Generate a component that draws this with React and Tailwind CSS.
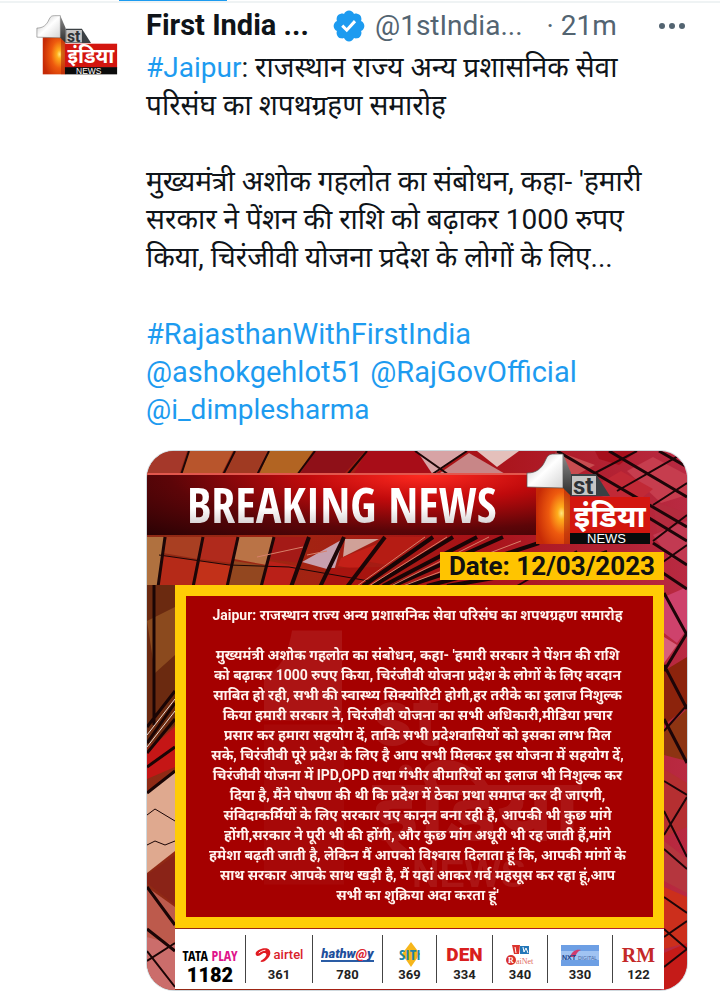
import React from "react";

const tweetLines = [
    { parts: [{ tag: "#Jaipur" }, ": राजस्थान राज्य अन्य प्रशासनिक सेवा"] },
    { parts: ["परिसंघ का शपथग्रहण समारोह"] },
    { parts: [] },
    { parts: ["मुख्यमंत्री अशोक गहलोत का संबोधन, कहा- 'हमारी"] },
    { parts: ["सरकार ने पेंशन की राशि को बढ़ाकर 1000 रुपए"] },
    { parts: ["किया, चिरंजीवी योजना प्रदेश के लोगों के लिए..."] },
    { parts: [] },
    { parts: [{ tag: "#RajasthanWithFirstIndia" }], large: true },
    { parts: [{ tag: "@ashokgehlot51" }, " ", { tag: "@RajGovOfficial" }], large: true },
    { parts: [{ tag: "@i_dimplesharma" }] },
];

const newsLines = [
    "Jaipur: राजस्थान राज्य अन्य प्रशासनिक सेवा परिसंघ का शपथग्रहण समारोह",
    "",
    "मुख्यमंत्री अशोक गहलोत का संबोधन, कहा- 'हमारी सरकार ने पेंशन की राशि",
    "को बढ़ाकर 1000 रुपए किया, चिरंजीवी योजना प्रदेश के लोगों के लिए वरदान",
    "साबित हो रही, सभी की स्वास्थ्य सिक्योरिटी होगी,हर तरीके का इलाज निशुल्क",
    "किया हमारी सरकार ने, चिरंजीवी योजना का सभी अधिकारी,मीडिया प्रचार",
    "प्रसार कर हमारा सहयोग दें, ताकि सभी प्रदेशवासियों को इसका लाभ मिल",
    "सके, चिरंजीवी पूरे प्रदेश के लिए है आप सभी मिलकर इस योजना में सहयोग दें,",
    "चिरंजीवी योजना में IPD,OPD तथा गंभीर बीमारियों का इलाज भी निशुल्क कर",
    "दिया है, मैंने घोषणा की थी कि प्रदेश में ठेका प्रथा समाप्त कर दी जाएगी,",
    "संविदाकर्मियों के लिए सरकार नए कानून बना रही है, आपकी भी कुछ मांगे",
    "होंगी,सरकार ने पूरी भी की होंगी, और कुछ मांग अधूरी भी रह जाती हैं,मांगे",
    "हमेशा बढ़ती जाती है, लेकिन मैं आपको विश्वास दिलाता हूं कि, आपकी मांगों के",
    "साथ सरकार आपके साथ खड़ी है, मैं यहां आकर गर्व महसूस कर रहा हूं,आप",
    "सभी का शुक्रिया अदा करता हूं'",
];

const ChannelLogo = ({ className, id }) => (
    <svg viewBox="0 0 125 92" className={className} role="img" aria-label="1st India News">
        <defs>
            <linearGradient id={`${id}-one`} x1="0" y1="0" x2="1" y2="1">
                <stop offset="0" stopColor="#b9b9b9" />
                <stop offset="0.5" stopColor="#ffffff" />
                <stop offset="1" stopColor="#d4d4d4" />
            </linearGradient>
            <radialGradient id={`${id}-glow`} cx="0.75" cy="0.46" r="0.75">
                <stop offset="0" stopColor="#ffe680" />
                <stop offset="0.15" stopColor="#ffae1c" />
                <stop offset="0.5" stopColor="#ee5a0e" />
                <stop offset="1" stopColor="#c62a06" />
            </radialGradient>
            <linearGradient id={`${id}-side`} x1="0" y1="0" x2="0" y2="1">
                <stop offset="0" stopColor="#8b8b8b" />
                <stop offset="1" stopColor="#2c2c2c" />
            </linearGradient>
        </defs>
        <rect x="10" y="34" width="34" height="57" fill={`url(#${id}-glow)`} />
        <path d="M38 34l7 9v48h-7z" fill="#a51d08" opacity="0.5" />
        <path d="M1 34V20c9 0 15-4 19-14 2-4 4-5 8-5h9v34z" fill={`url(#${id}-one)`} stroke="#555" strokeWidth="0.7" />
        <path d="M37 1l8 19v23l-8-8z" fill={`url(#${id}-side)`} />
        <path d="M45 21h25l14 22H45z" fill="#3b4044" />
        <rect x="46" y="23" width="24" height="19" fill="#c5c5c5" />
        <rect x="44" y="44" width="80" height="37" fill="#d3160f" />
        <rect x="44" y="80" width="80" height="11" fill="#0b0b0b" />
        <text x="47" y="41" fontSize="24" fontWeight="700" fill="#2d3236" fontFamily="Roboto, sans-serif">st</text>
        <text x="48" y="74" fontSize="31" fontWeight="700" fill="#fff" fontFamily="'Noto Sans', sans-serif">इंडिया</text>
        <text x="61" y="90" fontSize="13" fill="#fff" fontFamily="'Liberation Sans', sans-serif">NEWS</text>
    </svg>
);

const VerifiedBadge = () => (
    <svg viewBox="0 0 22 22" className="h-9 w-9 shrink-0" role="img" aria-label="Verified account">
        <path
            fill="#1d9bf0"
            d="M20.396 11c-.018-.646-.215-1.275-.57-1.816-.354-.54-.852-.972-1.438-1.246.223-.607.27-1.264.14-1.897-.131-.634-.437-1.218-.882-1.687-.47-.445-1.053-.75-1.687-.882-.633-.13-1.29-.083-1.897.14-.273-.587-.704-1.086-1.245-1.44S11.647 1.62 11 1.604c-.646.017-1.273.213-1.813.568s-.969.854-1.24 1.44c-.608-.223-1.267-.272-1.902-.14-.635.13-1.22.436-1.69.882-.445.47-.749 1.055-.878 1.688-.13.633-.08 1.29.144 1.896-.587.274-1.087.705-1.443 1.245-.356.54-.555 1.17-.574 1.817.02.647.218 1.276.574 1.817.356.54.856.972 1.443 1.245-.224.606-.274 1.263-.144 1.896.13.634.433 1.218.877 1.688.47.443 1.054.747 1.687.878.633.132 1.29.084 1.897-.136.274.586.705 1.084 1.246 1.439.54.354 1.17.551 1.816.569.647-.016 1.276-.213 1.817-.567s.972-.854 1.245-1.44c.604.239 1.266.296 1.903.164.636-.132 1.22-.447 1.68-.907.46-.46.776-1.044.908-1.681s.075-1.299-.165-1.903c.586-.274 1.084-.705 1.439-1.246.354-.54.551-1.17.569-1.816z"
        />
        <path fill="#fff" d="M9.662 14.85l-3.429-3.428 1.293-1.302 2.072 2.072 4.4-4.794 1.347 1.246z" />
    </svg>
);

// Tiled roof photo behind the news card
const Backdrop = () => (
    <svg
        viewBox="0 0 540 539"
        preserveAspectRatio="xMidYMid slice"
        className="absolute inset-0 h-full w-full"
        aria-hidden="true"
    >
        <defs>
            <linearGradient id="roof" x1="0" y1="0" x2="1" y2="0">
                <stop offset="0" stopColor="#8e2a15" />
                <stop offset="0.3" stopColor="#a32312" />
                <stop offset="0.6" stopColor="#a81217" />
                <stop offset="1" stopColor="#b92a42" />
            </linearGradient>
        </defs>
        <rect width="540" height="539" fill="url(#roof)" />

        <g>
            <path d="M0 0h40l-8 24H0z" fill="#a5382a" />
            <path d="M42 0h44l-12 24H34z" fill="#b8552c" />
            <path d="M88 0h34l-10 24H76z" fill="#a03a22" />
            <path d="M122 0h44l-16 24h-38z" fill="#b26422" />
            <path d="M168 0h50l-22 24h-44z" fill="#8f1018" />
            <path d="M220 0h58l8 24h-80z" fill="#a80d18" />
            <path d="M270 0h50l-34 24z" fill="#d7a3a5" />
            <path d="M322 2l38 22h-70z" fill="#c88687" />
            <path d="M330 0h42l-22 16z" fill="#e4c0bb" />
            <path d="M0 86h18l-6 49H0z" fill="#b0713f" />
            <path d="M20 86h35l-4 22-35-6z" fill="#a93f22" />
            <path d="M16 104l34 6-5 25H12z" fill="#b52a18" />
            <path d="M57 86h33l-5 26-32-4z" fill="#b02a1c" />
            <path d="M53 110l32 4-6 21H48z" fill="#c23119" />
            <path d="M92 86h34l-6 28-33-6z" fill="#ba7346" />
            <path d="M87 110l33 5-6 20H81z" fill="#93471f" />
            <path d="M128 86h34l-8 26-32-4z" fill="#a41a17" />
            <path d="M122 110l32 6-8 19h-30z" fill="#ba2018" />
            <path d="M196 88l-9 32-32-9z" fill="#c7a0ae" />
            <path d="M198 88h34l-36 18z" fill="#d0a198" />
            <path d="M194 107l36-14-17 26-22-4z" fill="#c42018" />
            <path d="M236 86h42l-38 28-22-4z" fill="#b51c14" />
            <path d="M240 116l-18 19h-48l8-18z" fill="#a7140f" />
        </g>

        <g stroke="#1c0607" strokeWidth="2" fill="none">
            <path d="M42 0l-8 24M88 0L76 24M122 0l-12 24M168 0l-18 24M220 0l-20 24M320 0l-36 24M268 0l34 24" />
            <path d="M18 86l-7 50M56 86l-10 50M91 86l-11 50M127 86l-13 50" strokeWidth="3" />
            <path d="M162 86l-18 50M197 86l-24 50M238 86l-38 50" strokeWidth="4" />
            <path d="M12 104l70 10 60 2 80 14" strokeWidth="1" />
        </g>

        {/* rays running to the middle of the roof */}
        <g stroke="#180506" strokeWidth="4" fill="none">
            <path d="M286 86l-70 49M306 86l-80 49M330 86l-94 49M356 86l-110 49M392 92l-132 43M400 104l-120 31M400 118l-100 17" />
        </g>
        <g stroke="#d8806a" strokeWidth="1" fill="none">
            <path d="M278 86l-68 49M300 86l-78 49M342 86l-98 49M374 90l-118 45M160 104l20-4M110 106l46-10" />
        </g>

        {/* right side */}
        <g>
            <path d="M410 0l38 14-30 16-20-16z" fill="#c84c50" />
            <path d="M448 0h42l-18 14-20-6z" fill="#a60f1c" />
            <path d="M480 20l26-14 34 18v20l-26 8z" fill="#c63d4e" />
            <path d="M440 40l34-20 32 18-22 18z" fill="#c12936" />
            <path d="M506 84l34-14v44l-18-8z" fill="#c23a52" />
            <path d="M506 50l34 12-30 20z" fill="#b52b3e" />
            <path d="M517 146l23-10v42l-10 14-13-10z" fill="#ce426c" />
            <path d="M517 186l13 8-13 18z" fill="#d8607b" />
            <path d="M517 220l23-14v50l-23 18z" fill="#8c230c" />
            <path d="M517 280l23-22v52l-23-6z" fill="#8d3412" />
            <path d="M517 318l23 14v44l-23 10z" fill="#b52f31" />
            <path d="M517 390l23 18v34l-23-12z" fill="#b5363e" />
            <path d="M517 436l23 10v46l-23 6z" fill="#cc2f1c" />
            <path d="M517 502l23-10v47h-23z" fill="#c51b18" />
        </g>
        <g stroke="#1d0508" strokeWidth="3" fill="none">
            <path d="M410 0l130 76M462 0l78 46M512 0l28 16M484 56l56 34M506 92l34 22M510 118l30 20" />
            <path d="M448 22l42-22M470 40l70-40M506 54l34-22M506 90l34-26M506 118l34-24M430 100l-60 35M460 100l-50 16" strokeWidth="2" />
            <path d="M517 142l23 42M540 182l-23 38M517 214l23 44M517 268l23 44" />
            <path d="M540 254l-23 26M517 330l23 14M540 346l-23 38M517 360l23 46M517 398l23 20M517 446l23 16M517 478l23 20M540 470l-23 16M517 516l23-18" strokeWidth="2" />
        </g>

        {/* left side */}
        <g>
            <path d="M0 134h28v140L0 296z" fill="#6b2a10" />
            <path d="M0 170l28-14v48L8 222z" fill="#8b4a1e" />
            <path d="M0 300l28-24v40L0 328z" fill="#c51616" />
            <path d="M0 340l28-16v60l-28 22z" fill="#c8413a" />
            <path d="M0 342l28-22v80L0 422z" fill="#dfa98f" />
            <path d="M0 424l28-20v50L0 432z" fill="#8a2317" />
            <path d="M0 436l28 20v50l-28-20z" fill="#bd5a4c" />
            <path d="M0 486l28 8v45H0z" fill="#cb6d6b" />
        </g>
        <g stroke="#1a0505" strokeWidth="3" fill="none">
            <path d="M7 134v140M28 240L0 276M28 252L0 292M28 268L0 302M28 296L0 316M28 320L0 342M0 436l28 38M0 478l28 22" />
            <path d="M0 510l28-18M0 500l28 36" strokeWidth="2" />
            <path d="M0 364l8-6 20 12M0 394l8-4 10 4 10-4" strokeWidth="1" />
        </g>
        <path d="M28 248L0 284M28 260L0 296" stroke="#e8d8d0" fill="none" />
    </svg>
);

// Faint channel mark under the card text
const Watermark = () => (
    <svg viewBox="0 0 467 320" className="absolute inset-0 h-full w-full" aria-hidden="true">
        <g fill="#fff" opacity="0.08">
            <path d="M78 80c16-6 24-22 28-46h50v90H78z" />
            <path d="M78 128h80v160H78z" opacity="0.4" />
            <text x="186" y="148" fontSize="80" fontWeight="700" fontFamily="Roboto, sans-serif">st</text>
            <text x="186" y="244" fontSize="90" fontWeight="700" fontFamily="'Noto Sans', sans-serif">इंडिया</text>
            <text x="226" y="290" fontSize="38" fontFamily="'Liberation Sans', sans-serif">NEWS</text>
        </g>
    </svg>
);

const operators = [
    {
        number: "1182",
        width: "w-[70px]",
        big: true,
        logo: (
            <span className="text-[14px] font-bold text-black font-['Open_Sans_Condensed',Roboto,sans-serif]">
                TATA <span className="text-[#e0148c]">PLAY</span>
            </span>
        ),
    },
    {
        number: "361",
        width: "w-[67px]",
        logo: (
            <span className="flex items-center gap-0.5 text-[13px] font-medium text-[#d9222a]">
                <svg viewBox="0 0 18 16" className="h-4 w-[17px]" aria-hidden="true">
                    <path
                        d="M1 5C3 2 9 0 13 1c5 2 4 8-1 12-2 2-5 3-6 2s3-2 5-5c2-2 1-4-1-4-3 0-4 3-7 3C1 9 0 7 1 5z"
                        fill="#e11b22"
                    />
                    <path d="M4 6c2-2 5-3 7-3" stroke="#fff" strokeWidth="1" fill="none" />
                </svg>
                airtel
            </span>
        ),
    },
    {
        number: "780",
        width: "w-[70px]",
        logo: (
            <span className="border-b-2 border-[#2a5ca5] text-[13px] leading-3 font-black italic text-[#1f4f9c]">
                hathw<span className="text-[#dc2430]">@</span>y
            </span>
        ),
    },
    {
        number: "369",
        width: "w-[54px]",
        logo: (
            <svg viewBox="0 0 28 28" className="h-7 w-7" role="img" aria-label="SITI">
                <path d="M15 1l9 12-9 13L6 13z" fill="#f6b61b" />
                <text x="3" y="19" fontSize="15" fontWeight="700" fill="#2383a5" fontFamily="'Open Sans Condensed', Roboto, sans-serif">SITI</text>
            </svg>
        ),
    },
    {
        number: "334",
        width: "w-[56px]",
        logo: <span className="text-[19px] font-black text-[#d91f1f]">DEN</span>,
    },
    {
        number: "340",
        width: "w-[55px]",
        logo: (
            <svg viewBox="0 0 30 24" className="h-6 w-[30px]" role="img" aria-label="RailNet">
                <path d="M7 2h8l-1 9H9z" fill="#dc332d" />
                <path d="M15 3h9v8h-9z" fill="#2377b8" />
                <path d="M10 4l1 6M18 4l1 5 2-4 2 5" stroke="#fff" fill="none" />
                <circle cx="6" cy="17" r="5" fill="#d9302b" />
                <text x="3" y="20" fontSize="8" fontWeight="700" fill="#fff" fontFamily="'Liberation Serif', serif">R</text>
                <text x="11" y="21" fontSize="8" fill="#e06b60" fontFamily="'Liberation Serif', serif">aiNet</text>
            </svg>
        ),
    },
    {
        number: "330",
        width: "w-[65px]",
        logo: (
            <svg viewBox="0 0 38 21" className="h-[21px] w-[38px]" role="img" aria-label="NXT Digital">
                <rect width="38" height="21" fill="#6d9fe4" />
                <rect y="6" width="38" height="9" fill="#a0c3f2" />
                <path d="M9 12c2-6 6-8 11-7-3 1-5 4-6 7z" fill="#cf3b6f" />
                <text x="1" y="15" fontSize="7" fontWeight="700" fill="#20468e" fontFamily="'Liberation Sans', sans-serif">NXT</text>
                <text x="17" y="15" fontSize="5" fill="#4667a2" fontFamily="'Liberation Sans', sans-serif">DIGITAL</text>
            </svg>
        ),
    },
    {
        number: "122",
        width: "w-[52px]",
        logo: <span className="font-['Liberation_Serif',serif] text-[20px] font-bold text-[#c42828]">RM</span>,
    },
];

const NewsCard = () => (
    <article className="relative mt-[21px] overflow-hidden rounded-[28px] border border-[#cfd9de] pb-px">
        <Backdrop />
        <div className="relative">
            <header className="flex items-start pt-0.5 pr-9">
                <div className="mt-5 flex h-[62px] flex-1 items-center border-t-2 border-[#e2574d] bg-[radial-gradient(ellipse_at_70%_0%,#ff2a20_0%,#c00a0c_30%,#5c0508_65%,#2a0204_100%)] pl-10">
                    <h2 className="bg-linear-to-b from-white from-55% to-[#bdb4b6] bg-clip-text text-[48px] leading-[60px] font-bold whitespace-nowrap text-transparent font-['Open_Sans_Condensed',Roboto,sans-serif]">
                        BREAKING NEWS
                    </h2>
                </div>
                <ChannelLogo id="card" className="-ml-4 h-[92px] w-[125px] shrink-0" />
            </header>

            <div className="mr-[23px] ml-7">
                <p className="mt-[7px] ml-auto w-fit bg-[#ffc400] px-[9px] text-[26px] leading-7 font-bold text-[#111]">
                    Date: 12/03/2023
                </p>

                <div className="relative mt-[5px] border-[11px] border-[#ffcc05] bg-[#a50000] pt-[9px] pr-1 pb-3 text-center text-[14px] leading-5 font-bold whitespace-nowrap text-[#fff3ee]">
                    <Watermark />
                    <div className="relative">
                        {newsLines.map((line, index) => (
                            <p key={index} className="flex min-h-5 justify-center">{line}</p>
                        ))}
                    </div>
                </div>

                <ul className="mt-px flex h-[60px] items-center justify-between bg-white">
                    {operators.map((op) => (
                        <li
                            key={op.number}
                            className={`${op.width} flex h-12 flex-col items-center border-l border-[#444] first:border-l-0`}
                        >
                            <span className="flex h-8 items-center whitespace-nowrap pt-2">{op.logo}</span>
                            <span className={op.big ? "text-[20px] leading-4 font-black text-black" : "text-[13px] leading-4 font-bold text-[#222]"}>
                                {op.number}
                            </span>
                        </li>
                    ))}
                </ul>
            </div>
        </div>
    </article>
);

const App = () => {
    return (
        <div className="min-h-screen bg-white font-[Roboto,'Noto_Sans',sans-serif] text-[#0f1419]">
            <div className="border-b-2 border-[#eff3f4]">
                <div className="ml-[119px] h-px w-[108px] bg-[#1d9bf0]" />
            </div>

            <div className="flex pr-8 pl-9">
                <a href="#profile" className="w-[110px] shrink-0 pt-3">
                    <ChannelLogo id="avatar" className="h-[60px] w-[82px]" />
                </a>

                <div className="min-w-0 flex-1">
                    <div className="flex h-[46px] items-center text-[28px] whitespace-nowrap">
                        <span className="w-[185px] text-[29px] font-bold">First India ...</span>
                        <VerifiedBadge />
                        <span className="ml-2 text-[#536471]">@1stIndia...</span>
                        <span className="ml-6 text-[#536471]">· 21m</span>
                        <button type="button" aria-label="More" className="ml-auto pr-0.5">
                            <svg viewBox="0 0 28 8" className="h-2 w-7" fill="#536471">
                                <circle cx="4" cy="4" r="3" />
                                <circle cx="14" cy="4" r="3" />
                                <circle cx="24" cy="4" r="3" />
                            </svg>
                        </button>
                    </div>

                    <div className="text-[28px] leading-[38px] whitespace-nowrap">
                        {tweetLines.map((line, index) => (
                            <p key={index} className={line.large ? "min-h-[38px] text-[29px]" : "min-h-[38px]"}>
                                {line.parts.map((part, i) =>
                                    part.tag ? (
                                        <a key={i} href="#tag" className="text-[#1d9bf0]">{part.tag}</a>
                                    ) : (
                                        <span key={i}>{part}</span>
                                    )
                                )}
                            </p>
                        ))}
                    </div>

                    <NewsCard />
                </div>
            </div>
        </div>
    );
};

export default App;
